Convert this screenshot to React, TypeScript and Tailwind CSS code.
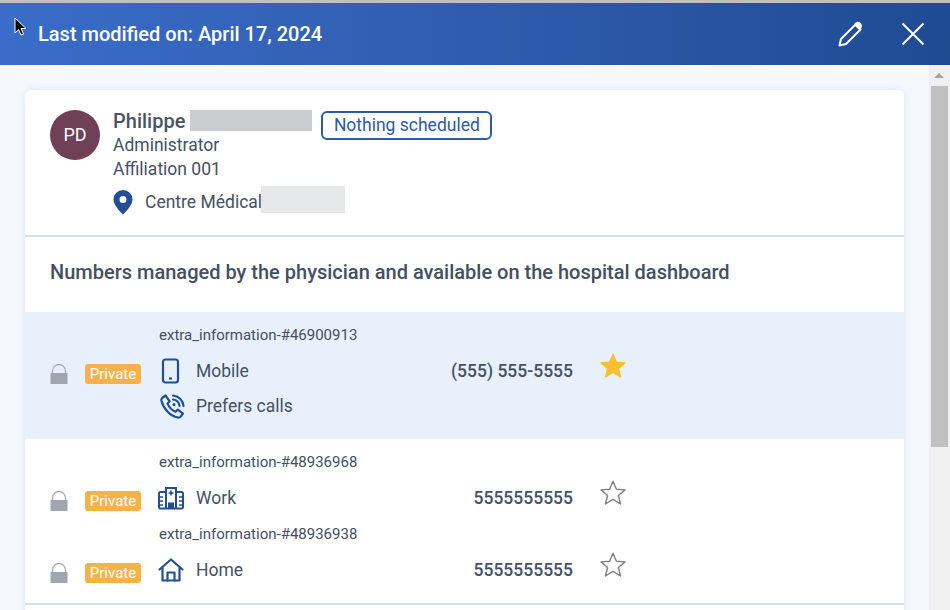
function Lock() {
  return (
    <svg width="18" height="20" viewBox="0 0 18 20" className="shrink-0">
      <path d="M2.500 9V7a6.500 6.500 0 0 1 13 0V9" fill="none" stroke="#a8adb5" strokeWidth="1.300" />
      <path d="M0.500 9h17v10.400a.6.6 0 0 1-.6.6H1.100a.6.6 0 0 1-.6-.6z" fill="#a0a6b0" />
    </svg>
  )
}

function Star({ filled }: { filled?: boolean }) {
  return (
    <svg width="28" height="28" viewBox="0 0 28 28" className="shrink-0 -mt-[10px] mr-[1px]">
      <path
        d="M14 2.200l3.400 8 8.600.7-6.600 5.600 2.100 8.500L14 20.400l-7.500 4.600 2.100-8.500L2 10.900l8.600-.7z"
        fill={filled ? '#fbbf33' : 'none'}
        stroke={filled ? '#fbbf33' : '#808080'}
        strokeWidth="1.400"
        strokeLinejoin="round"
      />
    </svg>
  )
}

function MobileIcon() {
  return (
    <svg width="20" height="26" viewBox="0 0 20 26" fill="none" stroke="#214e96" strokeWidth="2.200" className="ml-[3px]">
      <rect x="2" y="1.500" width="15" height="23" rx="2.500" />
      <path d="M8 20.500h3" />
    </svg>
  )
}

function CallIcon() {
  return (
    <svg width="26" height="26" viewBox="0 0 26 26" fill="none" stroke="#214e96" strokeWidth="2.200" strokeLinecap="round" strokeLinejoin="round">
      <path d="M5.500 2.500L2.200 5c-.8.7-1 1.500-.8 2.500 1.800 8 8.800 15.500 16.500 17 1.200.2 2-.1 2.700-.9l2.400-3-5.200-4-2.300 2.200c-3.500-1.500-6.300-4.500-8-8.200l2.200-2.300z" />
      <path d="M13 2.500c5.500.5 10 4.800 10.500 10.500" />
      <path d="M13 6.500c3.400.4 6.100 3 6.500 6.500" />
      <circle cx="14" cy="11.500" r="1.500" fill="#214e96" stroke="none" />
    </svg>
  )
}

function HospitalIcon() {
  return (
    <svg width="26" height="24" viewBox="0 0 26 24" fill="none" stroke="#214e96" strokeWidth="2">
      <path d="M8 22.500V2h10v20.500" />
      <path d="M8 6H2.500a1.500 1.500 0 0 0-1.500 1.500v13.500a1.500 1.500 0 0 0 1.500 1.500h21a1.500 1.500 0 0 0 1.500-1.500V7.500A1.500 1.500 0 0 0 23.500 6H18" />
      <path d="M13 4.500v5M10.500 7h5" strokeWidth="1.600" />
      <path d="M11 22.500v-5h4v5" fill="#214e96" />
      <path d="M1 11h4M1 15h4M1 19h4M21 11h4M21 15h4M21 19h4" strokeWidth="1.600" />
    </svg>
  )
}

function HomeIcon() {
  return (
    <svg width="26" height="24" viewBox="0 0 26 24" fill="none" stroke="#214e96" strokeWidth="2.200" strokeLinejoin="round" strokeLinecap="round">
      <path d="M1.500 11.500L13 1.500l11.500 10" />
      <path d="M4.500 10v12.500h17V10" />
      <path d="M9.500 22.500v-8h7v8" />
    </svg>
  )
}

function PrivateTag() {
  return (
    <span className="block w-14 h-5 rounded-[3px] bg-[#f5b24a] text-white text-[15px] leading-5 text-center shrink-0">Private</span>
  )
}

function NumberRow({ extra, icon, label, value, starred }: { extra: string; icon: React.ReactNode; label: string; value: string; starred?: boolean }) {
  return (
    <div>
      <div className="h-[18px] pl-[134px] text-[15px] leading-[18px] text-[#454f5f]">{extra}</div>
      <div className="flex items-center h-[54px] pl-[25px]">
        <div className="flex items-center gap-[17px] mt-[6px]">
          <Lock />
          <PrivateTag />
        </div>
        <div className="w-[38px] ml-[17px] flex items-center">{icon}</div>
        <span className="text-[17.5px] text-[#465064]">{label}</span>
        <span className="ml-auto w-[150px] text-right text-[17.5px] font-medium text-[#465064] mr-[26px]">{value}</span>
        <Star filled={starred} />
      </div>
    </div>
  )
}

export default function App() {
  return (
    <div className="w-[950px] h-[610px] overflow-hidden flex flex-col bg-[#f6f8fd] font-['Roboto',sans-serif]">
      <div className="h-[3px] bg-[#c0c0c0]" />
      <header className="h-[62px] flex items-center justify-between pl-[38px] pr-[25px] bg-gradient-to-r from-[#3a6dc9] via-[#2f5cae] to-[#1f4b93] relative">
        <svg width="14" height="20" viewBox="0 0 14 20" className="absolute left-[14px] top-[14px]">
          <path d="M1 1v15l3.500-3.500L7 18l2.500-1-2.500-5.500h5z" fill="#000" stroke="#fff" strokeWidth="1" />
        </svg>
        <h1 className="text-xl font-medium text-white">Last modified on: April 17, 2024</h1>
        <div className="flex items-center gap-[37px]">
          <svg width="26" height="26" viewBox="0 0 26 26" fill="none" stroke="#fff" strokeWidth="2" strokeLinejoin="round">
            <path d="M1.500 24.500l1.500-6.500L17.500 3.500l5 5L8 23z" />
            <path d="M17 3.500c1.500-2 3.500-2.200 5-.8s1.200 3.500-.5 5z" fill="#fff" />
          </svg>
          <svg width="24" height="24" viewBox="0 0 24 24" stroke="#fff" strokeWidth="2">
            <path d="M1.500 1.500l21 21M22.500 1.500l-21 21" />
          </svg>
        </div>
      </header>

      <div className="flex-1 flex min-h-0">
        <main className="flex-1 min-w-0 px-[25px] pt-[25px] overflow-hidden">
          <div className="bg-white rounded-md shadow-[0_0_8px_rgba(120,150,210,0.2)]">
            <section className="flex h-[147px] pl-[25px] pt-5 border-b-2 border-[#d3dff1]">
              <div className="w-[50px] h-[50px] rounded-full bg-[#6f4056] text-white text-lg flex items-center justify-center">PD</div>
              <div className="ml-[13px]">
                <div className="flex h-[24px]">
                  <span className="text-xl font-medium text-[#4a5462] leading-[24px] -mt-px">Philippe</span>
                  <div className="w-[122px] h-[21px] ml-[5px] bg-[#cbcdd1]" />
                  <span className="ml-[9px] mt-px h-[29px] px-[10.500px] rounded-md border-2 border-[#2f5aa5] text-[17.5px] leading-[25px] text-[#2f5aa5]">Nothing scheduled</span>
                </div>
                <div className="text-[17.5px] leading-6 text-[#465064] -mt-px">Administrator</div>
                <div className="text-[17.5px] leading-6 text-[#465064]">Affiliation 001</div>
                <div className="flex items-start mt-[5px]">
                  <svg width="20" height="26" viewBox="0 0 20 26" className="mt-[3px]">
                    <path fillRule="evenodd" d="M10 1a9.500 9.500 0 0 0-9.500 9.500C.5 17 10 25.500 10 25.500s9.500-8.500 9.500-15A9.500 9.500 0 0 0 10 1zm0 6a3.500 3.500 0 1 1 0 7 3.500 3.500 0 0 1 0-7z" fill="#214e96" />
                  </svg>
                  <span className="ml-[12px] text-[17.5px] leading-[30px] mt-px text-[#465064]">Centre Médical</span>
                  <div className="w-[84px] h-[27px] -ml-px bg-[#e6e7e9]" />
                </div>
              </div>
            </section>

            <h2 className="h-[75px] pl-[25px] pt-[23px] text-xl leading-[24px] font-medium text-[#454f5f]">
              Numbers managed by the physician and available on the hospital dashboard
            </h2>

            <div className="bg-[#e8f1fb] h-[127px] pt-[14px] pr-[276px]">
              <NumberRow extra="extra_information-#46900913" icon={<MobileIcon />} label="Mobile" value="(555) 555-5555" starred />
              <div className="flex items-center pl-[134px] -mt-[5px]">
                <div className="w-[36px] ml-[1px]"><CallIcon /></div>
                <span className="text-[17.5px] text-[#465064]">Prefers calls</span>
              </div>
            </div>

            <div className="h-[166px] pt-[14px] pr-[276px] border-b-2 border-[#d3dff1]">
              <NumberRow extra="extra_information-#48936968" icon={<HospitalIcon />} label="Work" value="5555555555" />
              <NumberRow extra="extra_information-#48936938" icon={<HomeIcon />} label="Home" value="5555555555" />
            </div>
            <div className="h-10" />
          </div>
        </main>

        <div className="w-[21px] shrink-0 bg-[#f0f0f0] flex flex-col items-center pr-[1px]">
          <div className="mt-[8px] w-0 h-0 border-x-[5px] border-x-transparent border-b-[5px] border-b-[#a3a3a3]" />
          <div className="mt-[8px] w-[17px] h-[361px] bg-[#c0c0c0]" />
        </div>
      </div>
    </div>
  )
}
